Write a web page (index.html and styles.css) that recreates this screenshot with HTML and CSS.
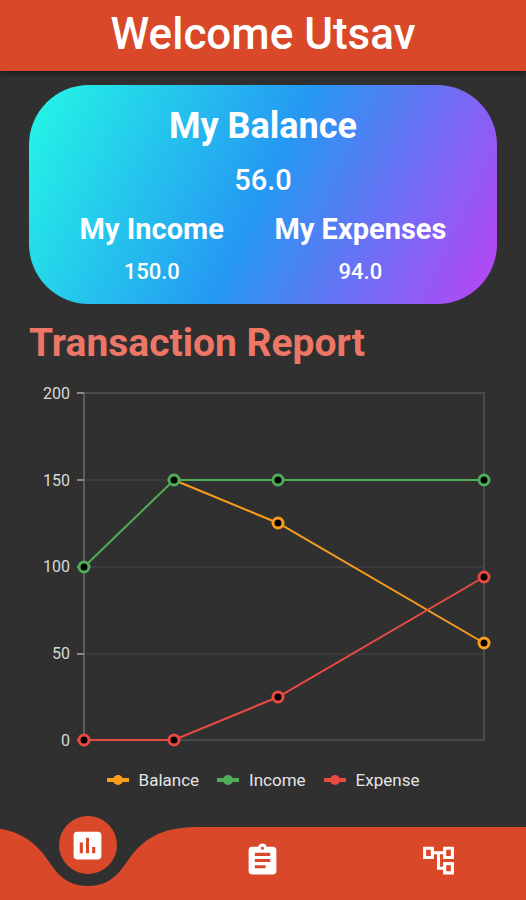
FILE: index.html
```html
<!DOCTYPE html>
<html lang="en">
<head>
  <meta charset="UTF-8">
  <meta name="viewport" content="width=device-width, initial-scale=1.0">
  <title>Welcome Utsav</title>
  <link rel="stylesheet" href="styles.css">
</head>
<body>

<header class="app-bar">
  <h1>Welcome Utsav</h1>
</header>

<main class="content">
  <section class="balance-card">
    <h2 class="balance-title">My Balance</h2>
    <p class="balance-value">56.0</p>
    <div class="totals">
      <div class="total">
        <h3>My Income</h3>
        <p>150.0</p>
      </div>
      <div class="total">
        <h3>My Expenses</h3>
        <p>94.0</p>
      </div>
    </div>
  </section>

  <h2 class="report-title">Transaction Report</h2>

  <svg class="chart" viewBox="0 0 468 372" role="img" aria-label="Balance, income and expense by transaction">
    <!-- Grid -->
    <g class="grid">
      <path d="M55 100H455M55 187H455M55 274H455"/>
    </g>
    <g class="frame">
      <path d="M55 13H455V360H55"/>
    </g>
    <g class="axis">
      <path d="M55 13V360"/>
    </g>
    <g class="ticks">
      <path d="M48 13H55M48 100H55M48 187H55M48 274H55M48 360H55"/>
    </g>

    <g class="labels">
      <text x="41" y="19">200</text>
      <text x="41" y="106">150</text>
      <text x="41" y="192">100</text>
      <text x="41" y="279">50</text>
      <text x="41" y="366">0</text>
    </g>

    <g class="series balance">
      <polyline points="145,100 249,143 455,263"/>
      <circle cx="249" cy="143" r="5"/>
      <circle cx="455" cy="263" r="5"/>
    </g>
    <g class="series income">
      <polyline points="55,187 145,100 249,100 455,100"/>
      <circle cx="55" cy="187" r="5"/>
      <circle cx="145" cy="100" r="5"/>
      <circle cx="249" cy="100" r="5"/>
      <circle cx="455" cy="100" r="5"/>
    </g>
    <g class="series expense">
      <polyline points="55,360 145,360 249,317 455,197"/>
      <circle cx="55" cy="360" r="5"/>
      <circle cx="145" cy="360" r="5"/>
      <circle cx="249" cy="317" r="5"/>
      <circle cx="455" cy="197" r="5"/>
    </g>
  </svg>

  <ul class="legend">
    <li><svg class="marker balance" viewBox="0 0 22 12"><path d="M0 6H22"/><circle cx="11" cy="6" r="5"/></svg>Balance</li>
    <li><svg class="marker income" viewBox="0 0 22 12"><path d="M0 6H22"/><circle cx="11" cy="6" r="5"/></svg>Income</li>
    <li><svg class="marker expense" viewBox="0 0 22 12"><path d="M0 6H22"/><circle cx="11" cy="6" r="5"/></svg>Expense</li>
  </ul>
</main>

<nav class="bottom-nav">
  <div class="nav-item">
    <!-- Curved cut-out behind the active button -->
    <svg class="notch" viewBox="0 0 224 60">
      <path d="M0 0C30 0 48 6 64 23C76 36 83 59 112 59C141 59 148 36 160 23C176 6 194 0 224 0Z"/>
    </svg>
    <button class="nav-button active" type="button" aria-label="Report">
      <svg class="icon" viewBox="0 0 24 24"><path d="M19 3H5c-1.1 0-2 .9-2 2v14c0 1.1.9 2 2 2h14c1.1 0 2-.9 2-2V5c0-1.1-.9-2-2-2zM9 17H7v-7h2v7zm4 0h-2V7h2v10zm4 0h-2v-4h2v4z"/></svg>
    </button>
  </div>
  <div class="nav-item">
    <button class="nav-button" type="button" aria-label="Transactions">
      <svg class="icon" viewBox="0 0 24 24"><path d="M19 3h-4.18C14.4 1.84 13.3 1 12 1c-1.3 0-2.4.84-2.82 2H5c-1.1 0-2 .9-2 2v14c0 1.1.9 2 2 2h14c1.1 0 2-.9 2-2V5c0-1.1-.9-2-2-2zm-7 0c.55 0 1 .45 1 1s-.45 1-1 1-1-.45-1-1 .45-1 1-1zm2 14H7v-2h7v2zm3-4H7v-2h10v2zm0-4H7V7h10v2z"/></svg>
    </button>
  </div>
  <div class="nav-item">
    <button class="nav-button" type="button" aria-label="Categories">
      <svg class="icon" viewBox="0 0 24 24"><path d="M22 11V3h-7v3H9V3H2v8h7V8h2v10h4v3h7v-8h-7v3h-2V8h2v3h7zM7 9H4V5h3v4zm10 6h3v4h-3v-4zm0-10h3v4h-3V5z"/></svg>
    </button>
  </div>
</nav>

</body>
</html>
```

FILE: styles.css
```css
* {
  box-sizing: border-box;
}

body {
  margin: 0;
  min-height: 100vh;
  display: flex;
  flex-direction: column;
  background-color: #303030;
  color: white;
  font-family: Roboto, "Liberation Sans", sans-serif;
  overflow-x: hidden;
}

h1, h2, h3, p {
  margin: 0;
}

.app-bar {
  padding: 10px 16px 13px;
  background-color: #d84829;
  text-align: center;
  box-shadow: 0 2px 6px rgba(0, 0, 0, 0.5);
}

.app-bar h1 {
  font-size: 44px;
  line-height: 48px;
  font-weight: 500;
}

.content {
  padding: 14px 29px 0;
}

/* Balance card */
.balance-card {
  padding: 20px 0 18px;
  border-radius: 60px;
  background: linear-gradient(115deg, #24f8e5, #2598f3 50%, #bd42f5);
  text-align: center;
}

.balance-title {
  font-size: 36px;
  line-height: 42px;
}

.balance-value {
  margin-top: 17px;
  font-size: 29px;
  line-height: 32px;
  font-weight: 500;
}

.totals {
  display: flex;
  justify-content: space-evenly;
  margin-top: 16px;
}

.total h3 {
  font-size: 29px;
  line-height: 34px;
}

.total p {
  margin-top: 12px;
  font-size: 22px;
  line-height: 28px;
  font-weight: 500;
}

.report-title {
  margin-top: 15px;
  color: #ec7767;
  font-size: 39px;
  line-height: 48px;
}

/* Chart */
.chart {
  display: block;
  width: 100%;
  margin-top: 13px;
  overflow: visible;
}

.grid path,
.frame path,
.axis path,
.ticks path {
  fill: none;
  stroke-width: 2;
}

.grid path {
  stroke: #3b3b3b;
}

.frame path {
  stroke: #4a4a4a;
}

.axis path {
  stroke: #5c5c5c;
}

.ticks path {
  stroke: #8a8a8a;
}

.labels text {
  fill: #d8d8d8;
  font-size: 16px;
  text-anchor: end;
}

.series polyline {
  fill: none;
  stroke: currentColor;
  stroke-width: 2;
}

.series circle {
  fill: black;
  stroke: currentColor;
  stroke-width: 3;
}

.balance {
  color: #f89d1c;
}

.income {
  color: #51ad55;
}

.expense {
  color: #e94b41;
}

.legend {
  display: flex;
  justify-content: center;
  gap: 18px;
  margin: 16px 0 0;
  padding: 0;
  list-style: none;
  color: #e4e4e4;
  font-size: 17px;
  line-height: 24px;
}

.legend li {
  display: flex;
  align-items: center;
  gap: 10px;
}

.marker {
  width: 22px;
  height: 12px;
  fill: currentColor;
  stroke: currentColor;
}

.marker path {
  stroke-width: 4;
}

.marker circle {
  stroke: none;
}

/* Bottom navigation */
.bottom-nav {
  display: grid;
  grid-template-columns: repeat(3, 1fr);
  margin-top: auto;
  background-color: #d84829;
}

.nav-item {
  position: relative;
  display: flex;
  justify-content: center;
  padding: 4px 0 11px;
}

.nav-button {
  display: flex;
  align-items: center;
  justify-content: center;
  width: 58px;
  height: 58px;
  padding: 0;
  border: none;
  border-radius: 50%;
  background-color: #d84829;
  color: white;
  cursor: pointer;
}

.nav-button.active {
  position: absolute;
  top: -11px;
}

.notch {
  position: absolute;
  top: 0;
  left: 50%;
  width: 224px;
  margin-left: -112px;
  fill: #303030;
}

.icon {
  width: 37px;
  height: 37px;
  fill: currentColor;
}
```
